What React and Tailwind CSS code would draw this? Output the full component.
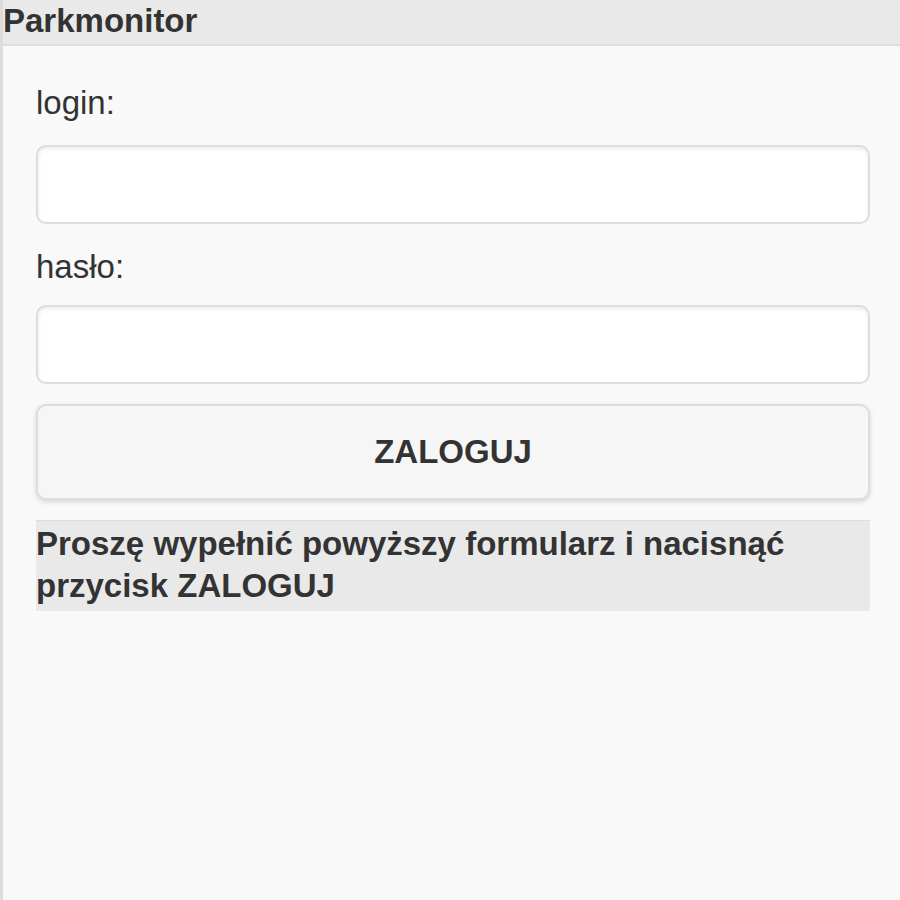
export default function App() {
  return (
    <div className="min-h-[900px] w-[900px] bg-[#f9f9f9] border-l-[3px] border-[#dcdcdc] text-[#333] font-['Liberation_Sans',Arial,sans-serif]">
      <Header title="Parkmonitor" />

      <div className="pl-[33px] pr-[30px] pt-[36px]">
        <Label text="login:" className="mb-[21px]" />
        <TextInput type="text" />

        <Label text="hasło:" className="mt-[22px] mb-[17px]" />
        <TextInput type="password" />

        <button
          type="button"
          className="mt-[20px] w-full h-[96px] bg-[#f6f6f6] border-2 border-[#dddddd] rounded-[10px] shadow-[0_2px_5px_rgba(0,0,0,0.15)] text-[33px] font-bold text-[#333]"
        >
          ZALOGUJ
        </button>

        <div className="mt-[20px] h-[91px] bg-[#e9e9e9] border-t border-[#dedede] pt-[2px] text-[33px] leading-[42px] font-bold">
          Proszę wypełnić powyższy formularz i nacisnąć przycisk ZALOGUJ
        </div>
      </div>
    </div>
  );
}

function Header({ title }) {
  return (
    <div className="h-[46px] bg-[#e9e9e9] border-b-2 border-[#dddddd] text-[33px] leading-[42px] font-bold">
      {title}
    </div>
  );
}

function Label({ text, className }) {
  return <div className={`text-[33px] leading-[42px] ${className}`}>{text}</div>;
}

function TextInput({ type }) {
  return (
    <input
      type={type}
      className="block w-full h-[79px] bg-white border-2 border-[#dddddd] rounded-[10px] shadow-[inset_0_2px_4px_rgba(0,0,0,0.08)] px-3 text-[33px] outline-none"
    />
  );
}
